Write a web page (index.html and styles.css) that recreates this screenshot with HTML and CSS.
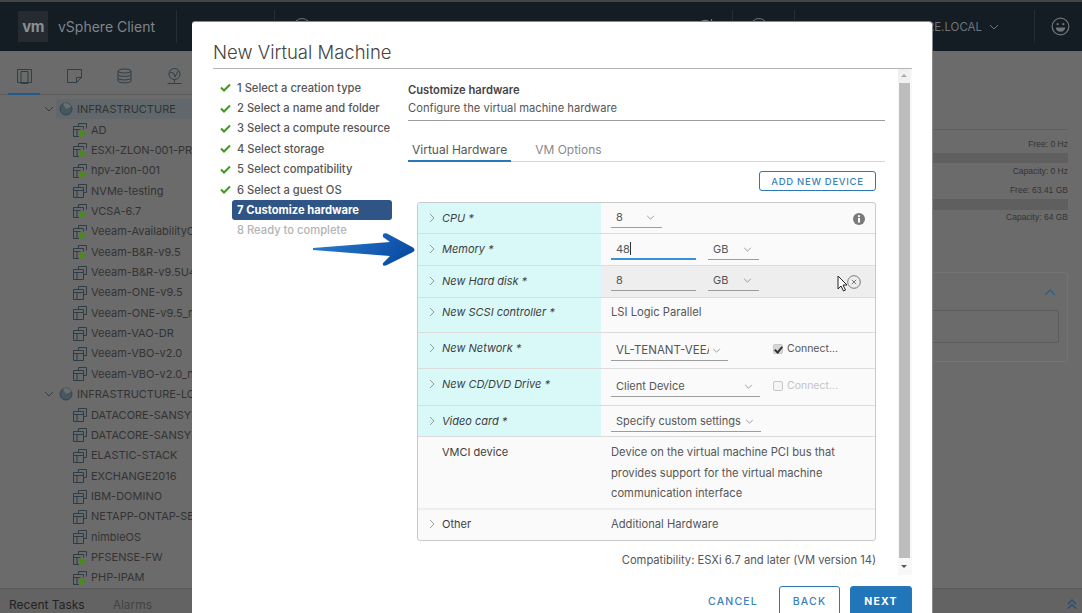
FILE: index.html
```html
<!DOCTYPE html>
<html lang="en">
<head>
<meta charset="utf-8">
<title>New Virtual Machine</title>
<link rel="stylesheet" href="styles.css">
</head>
<body>
<svg class="defs" width="0" height="0" aria-hidden="true">
  <symbol id="vm" viewBox="0 0 14 15"><path d="M5.500 4.500V1.500h8v8h-3M0.500 4.500h10v10h-10zM0.500 7.500h10M4 7.500v7" fill="none" stroke="currentColor"/></symbol>
  <symbol id="vmon" viewBox="0 0 14 15"><path d="M5.500 4.500V1.500h8v5M0.500 4.500h10v3M0.500 7.500h7M0.500 4.500v10h5.500M4 7.500v7" fill="none" stroke="currentColor"/><path d="M7 8l7 3.500-7 3.500z" fill="#4a8a1c"/></symbol>
  <symbol id="pool" viewBox="0 0 14 14"><circle cx="7" cy="7" r="6" fill="#47565f" stroke="#33434d"/><path d="M7 7L12.500 4.500A6 6 0 0 0 4 2z" fill="#6b6f71"/></symbol>
  <symbol id="tick" viewBox="0 0 11 9"><path d="M1 4.500l3 3L10 1.500" fill="none" stroke="#3c9a1e" stroke-width="2"/></symbol>
  <symbol id="caret" viewBox="0 0 10 6"><path d="M1 1l4 4 4-4" fill="none" stroke="currentColor"/></symbol>
  <symbol id="chev" viewBox="0 0 6 10"><path d="M1 1l4 4-4 4" fill="none" stroke="currentColor"/></symbol>
</svg>

<div class="shell">
  <header class="topbar">
    <div class="logo">vm</div>
    <div class="product">vSphere Client</div>
    <div class="divider"></div>
    <div class="gap97"></div>
    <div class="divider"></div>
    <div class="round search-ic"></div>
    <svg class="refresh" viewBox="0 0 18 18"><path d="M13 3.500A7.500 7.500 0 1 0 16.500 9M15.500 1v5h-5" fill="none" stroke="#6f7579" stroke-width="1.200"/></svg>
    <div class="divider d-help"></div>
    <div class="round help-ic"></div>
    <div class="divider d-user"></div>
    <div class="top-spacer"></div>
    <div class="user">RE.LOCAL <svg class="user-caret"><use href="#caret"/></svg></div>
    <div class="divider"></div>
    <svg class="smile" viewBox="0 0 20 20"><circle cx="10" cy="10" r="8.800" fill="none" stroke="#6f7579" stroke-width="1.300"/><circle cx="7" cy="7.500" r="1.200" fill="#6f7579"/><circle cx="13" cy="7.500" r="1.200" fill="#6f7579"/><path d="M5 11h10a5 4.500 0 0 1-10 0z" fill="#6f7579"/></svg>
  </header>

  <div class="work">
    <aside class="nav">
      <div class="nav-tabs">
        <div class="tab-item tab-on"><svg class="tab-ic" viewBox="0 0 17 16"><path d="M1.500 1.500h14v13h-14zM5 3.500h7v12H5z" fill="none" stroke="currentColor"/></svg></div>
        <div class="tab-item"><svg class="tab-ic" viewBox="0 0 17 16"><path d="M1.500 1.500h14v8l-5 5h-9zM15.500 9.500h-5v5z" fill="none" stroke="currentColor"/></svg></div>
        <div class="tab-item"><svg class="tab-ic" viewBox="0 0 17 16"><ellipse cx="8.500" cy="3" rx="6.500" ry="2" fill="none" stroke="currentColor"/><path d="M2 3v10c0 2.500 13 2.500 13 0V3M2 6.500c0 2.500 13 2.500 13 0M2 10c0 2.500 13 2.500 13 0" fill="none" stroke="currentColor"/></svg></div>
        <div class="tab-item"><svg class="tab-ic" viewBox="0 0 17 16"><circle cx="8.500" cy="6" r="5.500" fill="none" stroke="currentColor"/><path d="M4 4l4 1.500 1 3.500 3-6M8.500 11.500v3M1.500 15.500h14" fill="none" stroke="currentColor"/></svg></div>
      </div>
      <ul class="tree">
        <li class="node folder selected"><svg class="twist"><use href="#caret"/></svg><svg class="pool"><use href="#pool"/></svg><span>INFRASTRUCTURE</span></li>
        <li class="node"><svg class="vmi"><use href="#vmon"/></svg><span>AD</span></li>
        <li class="node"><svg class="vmi"><use href="#vmon"/></svg><span>ESXI-ZLON-001-PR</span></li>
        <li class="node"><svg class="vmi"><use href="#vmon"/></svg><span>hpv-zlon-001</span></li>
        <li class="node"><svg class="vmi"><use href="#vm"/></svg><span>NVMe-testing</span></li>
        <li class="node"><svg class="vmi"><use href="#vmon"/></svg><span>VCSA-6.7</span></li>
        <li class="node"><svg class="vmi"><use href="#vmon"/></svg><span>Veeam-AvailabilityConsole</span></li>
        <li class="node"><svg class="vmi"><use href="#vmon"/></svg><span>Veeam-B&amp;R-v9.5</span></li>
        <li class="node"><svg class="vmi"><use href="#vm"/></svg><span>Veeam-B&amp;R-v9.5U4</span></li>
        <li class="node"><svg class="vmi"><use href="#vm"/></svg><span>Veeam-ONE-v9.5</span></li>
        <li class="node"><svg class="vmi"><use href="#vm"/></svg><span>Veeam-ONE-v9.5_new</span></li>
        <li class="node"><svg class="vmi"><use href="#vm"/></svg><span>Veeam-VAO-DR</span></li>
        <li class="node"><svg class="vmi"><use href="#vm"/></svg><span>Veeam-VBO-v2.0</span></li>
        <li class="node"><svg class="vmi"><use href="#vm"/></svg><span>Veeam-VBO-v2.0_new</span></li>
        <li class="node folder"><svg class="twist"><use href="#caret"/></svg><svg class="pool"><use href="#pool"/></svg><span>INFRASTRUCTURE-LOCAL</span></li>
        <li class="node"><svg class="vmi"><use href="#vm"/></svg><span>DATACORE-SANSYMPHONY</span></li>
        <li class="node"><svg class="vmi"><use href="#vm"/></svg><span>DATACORE-SANSYMPHONY</span></li>
        <li class="node"><svg class="vmi"><use href="#vm"/></svg><span>ELASTIC-STACK</span></li>
        <li class="node"><svg class="vmi"><use href="#vm"/></svg><span>EXCHANGE2016</span></li>
        <li class="node"><svg class="vmi"><use href="#vm"/></svg><span>IBM-DOMINO</span></li>
        <li class="node"><svg class="vmi"><use href="#vm"/></svg><span>NETAPP-ONTAP-SELECT</span></li>
        <li class="node"><svg class="vmi"><use href="#vm"/></svg><span>nimbleOS</span></li>
        <li class="node"><svg class="vmi"><use href="#vmon"/></svg><span>PFSENSE-FW</span></li>
        <li class="node"><svg class="vmi"><use href="#vmon"/></svg><span>PHP-IPAM</span></li>
      </ul>
    </aside>
    <main class="summary">
      <div class="rule"></div>
      <div class="stat">Free: 0 Hz</div>
      <div class="meter"></div>
      <div class="stat">Capacity: 0 Hz</div>
      <div class="stat gap">Free: 63.41 GB</div>
      <div class="meter m2"></div>
      <div class="stat">Capacity: 64 GB</div>
      <div class="panel">
        <svg class="panel-caret" viewBox="0 0 12 7"><path d="M1 6l5-5 5 5" fill="none" stroke="#2a5f88" stroke-width="1.200"/></svg>
        <div class="panel-box"></div>
      </div>
    </main>
  </div>
  <footer class="tasks"><span class="task-on">Recent Tasks</span><span>Alarms</span>
    <svg class="collapse" viewBox="0 0 10 10"><path d="M1 5l4-4 4 4M1 9.500l4-4 4 4" fill="none" stroke="#234f78" stroke-width="1.300"/></svg>
  </footer>
</div>

<section class="modal">
  <h1 class="modal-title">New Virtual Machine</h1>
  <div class="modal-body">
    <ol class="steps">
      <li class="step"><svg class="tick"><use href="#tick"/></svg><span>1 Select a creation type</span></li>
      <li class="step"><svg class="tick"><use href="#tick"/></svg><span>2 Select a name and folder</span></li>
      <li class="step"><svg class="tick"><use href="#tick"/></svg><span>3 Select a compute resource</span></li>
      <li class="step"><svg class="tick"><use href="#tick"/></svg><span>4 Select storage</span></li>
      <li class="step"><svg class="tick"><use href="#tick"/></svg><span>5 Select compatibility</span></li>
      <li class="step"><svg class="tick"><use href="#tick"/></svg><span>6 Select a guest OS</span></li>
      <li class="step current"><span>7 Customize hardware</span></li>
      <li class="step future"><span>8 Ready to complete</span></li>
    </ol>
    <div class="pane">
      <div class="content">
        <div class="head">
          <div class="head-title">Customize hardware</div>
          <div class="head-sub">Configure the virtual machine hardware</div>
        </div>
        <div class="tabs"><span class="tab active">Virtual Hardware</span><span class="tab">VM Options</span></div>
        <div class="actions"><button class="btn-add">ADD NEW DEVICE</button></div>
        <div class="hw">
          <div class="row r-cpu">
            <div class="lab"><svg class="chev"><use href="#chev"/></svg><em>CPU *</em></div>
            <div class="val"><div class="dd w51"><span>8</span><svg class="dd-c"><use href="#caret"/></svg></div><svg class="info" viewBox="0 0 12 12"><circle cx="6" cy="6" r="6" fill="#7a7a7a"/><rect x="5" y="5" width="2" height="4.500" fill="#fff"/><circle cx="6" cy="3.200" r="1.100" fill="#fff"/></svg></div>
          </div>
          <div class="row r-mem">
            <div class="lab"><svg class="chev"><use href="#chev"/></svg><em>Memory *</em></div>
            <div class="val"><div class="inp focus"><span>48</span><i class="cursor"></i></div><div class="dd w51 unit"><span>GB</span><svg class="dd-c"><use href="#caret"/></svg></div></div>
          </div>
          <div class="row r-mem hover">
            <div class="lab"><svg class="chev"><use href="#chev"/></svg><em>New Hard disk *</em></div>
            <div class="val"><div class="inp"><span>8</span></div><div class="dd w51 unit"><span>GB</span><svg class="dd-c"><use href="#caret"/></svg></div><svg class="remove" viewBox="0 0 14 14"><circle cx="7" cy="7" r="6.300" fill="none" stroke="#777"/><path d="M4.800 4.800l4.400 4.400M9.200 4.800l-4.400 4.400" fill="none" stroke="#777"/></svg></div>
          </div>
          <div class="row r-scsi">
            <div class="lab lab-tight"><svg class="chev"><use href="#chev"/></svg><em>New SCSI controller *</em></div>
            <div class="val plain">LSI Logic Parallel</div>
          </div>
          <div class="row r-net">
            <div class="lab"><svg class="chev"><use href="#chev"/></svg><em>New Network *</em></div>
            <div class="val"><div class="dd w117"><span class="clip">VL-TENANT-VEEAM</span><svg class="dd-c"><use href="#caret"/></svg></div><label class="conn"><i class="box on"></i>Connect...</label></div>
          </div>
          <div class="row r-cd">
            <div class="lab"><svg class="chev"><use href="#chev"/></svg><em>New CD/DVD Drive *</em></div>
            <div class="val"><div class="dd w149"><span>Client Device</span><svg class="dd-c"><use href="#caret"/></svg></div><label class="conn off"><i class="box"></i>Connect...</label></div>
          </div>
          <div class="row r-vid">
            <div class="lab"><svg class="chev"><use href="#chev"/></svg><em>Video card *</em></div>
            <div class="val"><div class="dd w150"><span>Specify custom settings</span><svg class="dd-c"><use href="#caret"/></svg></div></div>
          </div>
          <div class="row r-vmci">
            <div class="lab nolab">VMCI device</div>
            <div class="val plain desc">Device on the virtual machine PCI bus that provides support for the virtual machine communication interface</div>
          </div>
          <div class="row r-other">
            <div class="lab nolab2"><svg class="chev"><use href="#chev"/></svg>Other</div>
            <div class="val plain">Additional Hardware</div>
          </div>
        </div>
        <div class="compat">Compatibility: ESXi 6.7 and later (VM version 14)</div>
      </div>
      <div class="scroll"><i class="up"></i><div class="thumb"></div><i class="down"></i></div>
    </div>
  </div>
  <div class="foot">
    <button class="btn link">CANCEL</button>
    <button class="btn outline">BACK</button>
    <button class="btn primary">NEXT</button>
  </div>
</section>

<svg class="arrow" viewBox="0 0 102 36"><defs><linearGradient id="ag" x1="0" x2="1" y1="0" y2="0.300"><stop offset="0" stop-color="#2d7fd0"/><stop offset="1" stop-color="#0c4ea6"/></linearGradient></defs><path d="M0 16L77 10 70 5Q69 0 74 1.500L100 15.500Q103 18 100 20L74 33Q69 35 70 31L77 24 0 18z" fill="url(#ag)"/></svg>
<svg class="pointer" viewBox="0 0 12 17"><path d="M1 1v13l3-3 2.500 5 2-1-2.500-5h4z" fill="#fff" stroke="#222"/></svg>
</body>
</html>
```

FILE: styles.css
```css
* { box-sizing: border-box; }
html, body { margin: 0; height: 100%; overflow: hidden; }
body { font-family: "Inter", "Liberation Sans", sans-serif; font-size: 11px; color: #565656; background: #6b6b6b; }
.defs { position: absolute; }
button { font-family: inherit; }

.shell { width: 1082px; height: 613px; display: flex; flex-direction: column; border-top: 2px solid #444; }
.topbar { height: 49px; flex: none; background: #141c24; display: flex; align-items: center; color: #6f7579; }
.logo { width: 30px; height: 31px; margin-left: 18px; background: #252b31; color: #8a8f93; font-size: 15px; font-weight: 700; display: flex; align-items: center; justify-content: center; letter-spacing: -0.5px; }
.product { margin-left: 10px; font-size: 14px; width: 118px; white-space: nowrap; color: #7f8589; }
.divider { width: 1px; height: 33px; background: #262e35; flex: none; }
.gap97 { width: 97px; flex: none; }
.round { width: 18px; height: 18px; border: 1px solid #6f7579; border-radius: 50%; flex: none; }
.search-ic { margin-left: 18px; }
.refresh { width: 18px; height: 18px; margin-left: 385px; flex: none; }
.d-help { margin-left: 18px; }
.help-ic { margin-left: 17px; }
.d-user { margin-left: 26px; }
.top-spacer { flex: 1; }
.user { font-size: 11.500px; display: flex; align-items: center; gap: 7px; margin-right: 35px; }
.user-caret { width: 10px; height: 6px; }
.smile { width: 19px; height: 19px; margin: 0 12px 0 16px; flex: none; }

.work { flex: 1; display: flex; min-height: 0; }
.nav { width: 192px; flex: none; display: flex; flex-direction: column; }
.nav-tabs { height: 44px; flex: none; display: flex; gap: 18px; padding-left: 8px; border-bottom: 1px solid #5c5c5c; color: #2f3e47; }
.tab-item { width: 32px; height: 44px; padding: 17px 0 0 8px; flex: none; }
.tab-on { border-bottom: 2px solid #1f5a8c; }
.tab-ic { width: 17px; height: 16px; display: block; }
.tree { list-style: none; margin: 4px 0 0; padding: 0 0 0 73px; }
.node { height: 20.360px; display: flex; align-items: center; gap: 4px; white-space: nowrap; font-size: 11px; color: #333; }
.vmi { width: 14px; height: 15px; flex: none; color: #2d3d47; }
.folder { margin-left: -29px; }
.selected { background: linear-gradient(to right, transparent 12px, #60686b 12px); }
.twist { width: 10px; height: 6px; margin-right: 1px; color: #2f3e47; flex: none; }
.pool { width: 14px; height: 14px; flex: none; }

.summary { flex: 1; padding: 78px 14px 0 0; display: flex; flex-direction: column; font-size: 8.500px; color: #333; text-align: right; min-width: 0; }
.rule { height: 1px; background: #5f5f5f; margin-bottom: 7px; flex: none; }
.stat { height: 14px; line-height: 14px; font-family: "Liberation Sans", sans-serif; flex: none; }
.stat.gap { margin-top: 5px; }
.meter { height: 10px; background: #5f5f5f; margin: 2px 0 1px; flex: none; }
.m2 { height: 11px; margin-bottom: 0; }
.panel { margin-top: 48px; height: 90px; border: 1px solid #737373; border-radius: 3px; position: relative; padding: 37px 8px 0 0; flex: none; }
.panel-box { height: 33px; border: 1px solid #5c5c5c; border-radius: 2px; }
.panel-caret { position: absolute; right: 11px; top: 16px; width: 12px; height: 7px; }

.tasks { height: 25px; flex: none; background: #636363; border-top: 1px solid #5a5a5a; display: flex; align-items: flex-start; gap: 28px; padding: 8px 0 0 9px; font-size: 12px; color: #444; }
.task-on { color: #222; }
.collapse { width: 10px; height: 10px; margin: 2px 5px 0 auto; flex: none; }

.modal { position: absolute; left: 192px; top: 22px; width: 740px; height: 600px; background: #fff; border-radius: 3px; padding: 0 20px 0 21px; display: flex; flex-direction: column; color: #565656; box-shadow: 1px 0 0 #8a8a8a, 0 -1px 0 #8a8a8a; }
.modal-title { margin: 0; height: 47px; padding-top: 19px; border-bottom: 1px solid #b5b5b5; font-size: 18.500px; line-height: 22px; font-weight: 300; color: #444; }
.modal-body { display: flex; flex: none; height: 507px; }
.steps { list-style: none; margin: 0; padding: 8.500px 0 0; width: 195px; flex: none; }
.step { height: 20.400px; display: flex; align-items: center; font-weight: 500; font-size: 11.200px; color: #565656; white-space: nowrap; }
.tick { width: 11px; height: 9px; margin: 0 6px 0 7px; flex: none; }
.current { margin-left: 19px; width: 160px; background: #2e5585; color: #fff; font-weight: 700; border-radius: 3px; padding-left: 5px; }
.future { margin-left: 24px; color: #b3b3b3; }

.pane { flex: 1; display: flex; min-width: 0; }
.content { width: 477px; flex: none; }
.head { height: 52px; padding-top: 14px; border-bottom: 1px solid #9c9c9c; }
.head-title { font-weight: 600; color: #444; line-height: 14px; font-size: 11.200px; }
.head-sub { margin-top: 4px; line-height: 14px; font-size: 11.200px; }
.tabs { height: 41px; padding-top: 20px; border-bottom: 1px solid #d7d7d7; display: flex; gap: 20px; font-size: 12px; }
.tab { padding: 0 4px; height: 21px; line-height: 17px; color: #8a8a8a; }
.tab.active { color: #565656; border-bottom: 2px solid #2b77b8; margin-left: 0; }
.actions { height: 40px; padding: 9px 9px 0 0; display: flex; justify-content: flex-end; align-items: flex-start; }
.btn-add { width: 117px; height: 20px; padding: 0; background: #fff; border: 1px solid #2b77b8; border-radius: 3px; color: #3a7fba; font-size: 9.500px; font-weight: 500; letter-spacing: 0.700px; }

.hw { margin-left: 9px; width: 459px; height: 339px; border: 1px solid #c9c9c9; border-radius: 3px; background: #fafafa; overflow: hidden; }
.row { display: flex; border-bottom: 1px solid #dcdcdc; }
.row:last-child { border-bottom: 0; }
.r-cpu { height: 31px; }
.r-mem { height: 32px; }
.r-scsi { height: 35px; }
.r-net { height: 36px; }
.r-cd { height: 37px; }
.r-vid { height: 31px; }
.r-vmci { height: 73px; border-bottom-width: 2px; border-bottom-color: #eee; }
.r-other { height: 30px; }
.hover { background: #eeeeee; }
.lab { width: 183px; flex: none; background: #d9f9f9; color: #3e3e3e; display: flex; align-items: flex-start; padding: 8px 0 0 11px; gap: 7px; }
.lab-tight { padding-top: 7px; }
.lab em { font-style: italic; font-size: 11px; line-height: 14px; }
.chev { width: 6px; height: 10px; flex: none; color: #9a9a9a; margin-top: 2px; }
.nolab, .nolab2 { background: transparent; font-size: 11px; line-height: 14px; }
.nolab { padding-left: 24px; }
.nolab2 { padding-top: 7px; }
.val { flex: 1; display: flex; align-items: flex-start; padding: 3px 0 0 10px; position: relative; min-width: 0; }
.r-cpu .val { padding-top: 1px; }
.r-mem .val { padding-top: 2px; }
.hover .val { padding-top: 1px; }
.r-vid .val { padding-top: 2px; }
.val.plain { display: block; padding-top: 7px; line-height: 14px; font-size: 11.200px; }
.val.desc { padding-top: 5px; padding-right: 25px; line-height: 20.500px; }
.dd { height: 24px; display: flex; align-items: center; justify-content: space-between; border-bottom: 1px solid #9c9c9c; padding: 3px 7px 0 5px; font-size: 11px; white-space: nowrap; flex: none; }
.w51 { width: 51px; }
.w117 { width: 117px; margin-top: 1px; }
.w149 { width: 149px; margin-top: 1px; }
.w150 { width: 150px; }
.dd-c { width: 9px; height: 5px; flex: none; color: #8a8a8a; }
.clip { width: 93px; overflow: hidden; font-size: 11.500px; }
.unit { margin-left: 12px; }
.inp { width: 85px; height: 24px; display: flex; align-items: center; padding: 3px 0 0 5px; border-bottom: 1px solid #9c9c9c; font-size: 11px; flex: none; }
.inp.focus { border-bottom: 2px solid #3b8fd4; }
.cursor { width: 1px; height: 13px; background: #333; }
.info { position: absolute; right: 10px; top: 10px; width: 12px; height: 12px; }
.remove { position: absolute; right: 14px; top: 9px; width: 14px; height: 14px; }
.conn { position: absolute; left: 172px; top: 9px; display: flex; align-items: center; gap: 4px; font-size: 10.500px; line-height: 14px; }
.r-cd .conn { top: 10px; }
.conn.off { color: #c4c4c4; }
.box { width: 10px; height: 10px; background: #d8d8d8; border: 1px solid #c8c8c8; border-radius: 2px; position: relative; }
.box.on::after { content: ""; position: absolute; left: 2px; top: 0; width: 3px; height: 6px; border: solid #333; border-width: 0 2px 2px 0; transform: rotate(40deg); }
.conn.off .box { background: #f5f5f5; }
.compat { margin: 12px 9px 0 0; text-align: right; line-height: 14px; font-size: 11.200px; }

.scroll { width: 14px; margin-left: 13px; height: 506px; flex: none; background: #f8f8f8; display: flex; flex-direction: column; }
.up, .down { width: 12px; flex: none; position: relative; }
.up { height: 14px; background: #f0f0f0; }
.down { height: 17px; }
.up::after { content: ""; position: absolute; left: 3px; top: 5px; border: 3px solid transparent; border-top: 0; border-bottom: 3px solid #aaa; }
.down::after { content: ""; position: absolute; left: 3px; top: 7px; border: 3px solid transparent; border-bottom: 0; border-top: 3px solid #555; }
.thumb { flex: 1; margin: 0 2px 0 1px; background: #bdbdbd; }

.foot { display: flex; justify-content: flex-end; align-items: flex-start; padding-top: 10px; gap: 10px; }
.btn { height: 30px; padding: 0; font-size: 10.500px; font-weight: 500; letter-spacing: 1.200px; border-radius: 3px; border: 1px solid #2b77b8; background: #fff; color: #3a7fba; }
.link { border-color: transparent; width: 60px; margin-right: 6px; }
.outline { width: 61px; }
.primary { width: 62px; background: #2176ba; color: #fff; font-weight: 700; }

.arrow { position: absolute; left: 313px; top: 232px; width: 102px; height: 36px; }
.pointer { position: absolute; left: 837px; top: 275px; width: 12px; height: 17px; }
```
